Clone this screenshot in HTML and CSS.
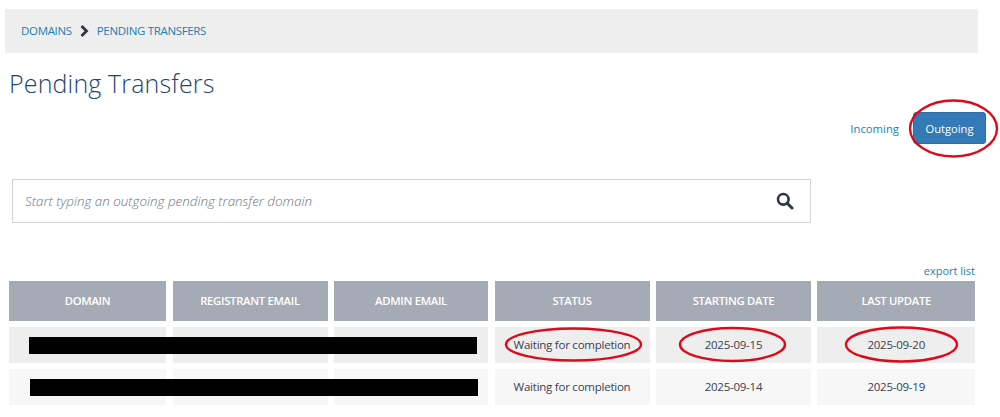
FILE: index.html
```html
<!DOCTYPE html>
<html lang="en">
<head>
<meta charset="utf-8">
<title>Pending Transfers</title>
<link rel="stylesheet" href="styles.css">
</head>
<body>
<div class="page">
  <nav class="crumbs">
    <a href="#">DOMAINS</a>
    <svg class="chev" width="9" height="12" viewBox="0 0 9 12"><path d="M1.5 1 L6.5 6 L1.5 11" fill="none" stroke="#33363f" stroke-width="2.8"/></svg>
    <a href="#">PENDING TRANSFERS</a>
  </nav>
  <h1 class="title">Pending Transfers</h1>
  <div class="tabs">
    <a href="#" class="tab-link">Incoming</a>
    <a href="#" class="tab-active">Outgoing</a>
  </div>
  <div class="search">
    <span class="search-hint">Start typing an outgoing pending transfer domain</span>
    <svg class="search-icon" width="18" height="18" viewBox="0 0 18 18"><circle cx="7.3" cy="7.3" r="5.3" fill="none" stroke="#2f3644" stroke-width="2.6"/><path d="M11.2 11.2 L16 16" stroke="#2f3644" stroke-width="3" stroke-linecap="round"/></svg>
  </div>
  <div class="export"><a href="#">export list</a></div>
  <div class="table">
    <div class="th">DOMAIN</div><div class="th">REGISTRANT EMAIL</div><div class="th">ADMIN EMAIL</div><div class="th">STATUS</div><div class="th">STARTING DATE</div><div class="th">LAST UPDATE</div>
    <div class="td"></div><div class="td"></div><div class="td"></div><div class="td">Waiting for completion</div><div class="td">2025-09-15</div><div class="td">2025-09-20</div>
    <div class="td alt"></div><div class="td alt"></div><div class="td alt"></div><div class="td alt">Waiting for completion</div><div class="td alt">2025-09-14</div><div class="td alt">2025-09-19</div>
  </div>
</div>
<div class="redact redact-1"></div>
<div class="redact redact-2"></div>
<svg class="marks" width="1000" height="417" viewBox="0 0 1000 417">
  <g fill="none" stroke="#dd0a1c" stroke-width="2.4">
    <ellipse cx="953.5" cy="128.5" rx="43.5" ry="28"/>
    <ellipse cx="573.5" cy="344.5" rx="67.5" ry="16"/>
    <ellipse cx="732.5" cy="344.5" rx="52.5" ry="16.5"/>
    <ellipse cx="901.5" cy="344.5" rx="55.5" ry="17"/>
  </g>
</svg>
</body>
</html>
```
FILE: styles.css
```css
html, body { margin: 0; padding: 0; background: #fff; }
body { width: 1000px; height: 417px; overflow: hidden; position: relative; font-family: "Open Sans", sans-serif; font-size: 11px; color: #3a4150; }
a { color: #1a7fb5; text-decoration: none; }
.page { padding: 9px 25px 0 5px; display: flex; flex-direction: column; }
.crumbs { height: 44px; width: 973px; background: #eeeeee; display: flex; align-items: center; gap: 8px; padding: 0 0 1px 16px; box-sizing: border-box; font-size: 11.5px; letter-spacing: -0.33px; }
.chev { flex: none; }
.title { margin: 13px 0 0 4px; height: 37px; font-size: 25px; line-height: 34px; font-weight: 300; color: #1f4470; letter-spacing: 0.15px; }
.tabs { display: flex; justify-content: flex-end; align-items: center; gap: 14px; margin-top: 9px; width: 981px; height: 32px; }
.tab-link { font-size: 11.3px; }
.tab-active { width: 73px; height: 32px; background: #337ab7; border: 1px solid #2e6da4; border-radius: 3px; color: #fff; font-size: 11.2px; display: flex; align-items: center; justify-content: center; box-sizing: border-box; }
.search { margin: 35px 0 0 7px; width: 799px; height: 44px; box-sizing: border-box; border: 1px solid #d4d4d4; display: flex; align-items: center; justify-content: space-between; padding: 0 16px 0 12px; }
.search-hint { font-size: 13.4px; font-style: italic; font-weight: 300; color: #6e7480; }
.export { width: 970px; margin-top: 39px; height: 19px; line-height: 17px; text-align: right; font-size: 11px; }
.table { margin-left: 4px; width: 966px; display: grid; grid-template-columns: 157px 155px 154px 155px 154.9px 157.6px; column-gap: 6.5px; grid-template-rows: 40px 36px 36px; row-gap: 6px; }
.th { background: #a5abb4; color: #fff; font-weight: 600; font-size: 11.3px; letter-spacing: -0.3px; display: flex; align-items: center; justify-content: center; padding-bottom: 2px; box-sizing: border-box; }
.td { background: #eeeeee; font-size: 11.5px; letter-spacing: -0.24px; display: flex; align-items: center; justify-content: center; padding-bottom: 2px; box-sizing: border-box; }
.td.alt { background: #f7f7f7; }
.redact { position: absolute; background: #000; height: 17px; }
.redact-1 { left: 29px; top: 337px; width: 448px; }
.redact-2 { left: 30px; top: 379px; width: 448px; }
.marks { position: absolute; left: 0; top: 0; pointer-events: none; }
```
